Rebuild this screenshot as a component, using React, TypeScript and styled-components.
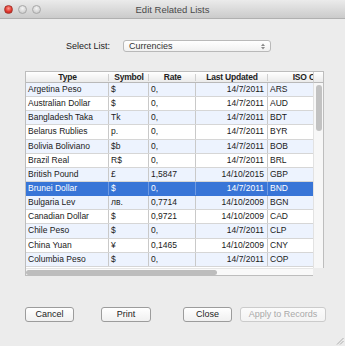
import React from "react";
import styled, { createGlobalStyle } from "styled-components";

const Global = createGlobalStyle`
  html, body { margin: 0; padding: 0; background: #ececec; }
  body { font-family: "Liberation Sans", Arial, sans-serif; }
`;

const Window = styled.div`
  width: 345px;
  height: 346px;
  position: relative;
  overflow: hidden;
  background: #ececec;
  display: flex;
  flex-direction: column;
`;

const TitleBar = styled.div`
  height: 18px;
  flex: none;
  display: grid;
  grid-template-columns: 1fr auto 1fr;
  align-items: center;
  background: linear-gradient(#ebebeb, #cbcbcb);
  border-bottom: 1px solid #b0b0b0;
`;

const Lights = styled.div`
  display: flex;
  gap: 5px;
  padding-left: 4px;
`;

const Light = styled.span<{ $red?: boolean }>`
  width: 9px;
  height: 9px;
  box-sizing: border-box;
  border-radius: 50%;
  background: ${(p) =>
    p.$red
      ? "radial-gradient(circle at 50% 35%, #ff9a90, #e2372e 55%, #b3201a)"
      : "radial-gradient(circle at 50% 35%, #f4f4f4, #d6d6d6 60%, #bfbfbf)"};
  border: 1px solid ${(p) => (p.$red ? "#a5372f" : "#a8a8a8")};
`;

const Title = styled.div`
  font-size: 9.5px;
  color: #4a4a4a;
`;

const SelectRow = styled.div`
  display: flex;
  align-items: center;
  margin-top: 21px;
  padding-left: 66px;
  height: 12px;
`;

const Label = styled.span`
  width: 57px;
  font-size: 9px;
  color: #222;
`;

const Popup = styled.div`
  width: 148px;
  height: 12px;
  box-sizing: border-box;
  border: 1px solid #b9b9b9;
  border-radius: 3px;
  background: linear-gradient(#ffffff, #f1f1f1);
  display: flex;
  align-items: center;
  justify-content: space-between;
  padding: 0 5px 0 5px;
  font-size: 9px;
  color: #333;
`;

const Frame = styled.div`
  margin: 19px 0 0 25px;
  width: 299px;
  height: 205px;
  box-sizing: border-box;
  border-top: 1px solid #bdbdbd;
  border-left: 1px solid #bdbdbd;
  display: grid;
  grid-template-columns: 287px 11px;
  grid-template-rows: 11px 185px 8px;
  background: #fff;
`;

const Viewport = styled.div`
  grid-row: 1 / 3;
  grid-column: 1;
  overflow: hidden;
  display: flex;
  flex-direction: column;
`;

const COLS = "83px 40px 47px 72px 86px";

const HeaderRow = styled.div`
  display: grid;
  grid-template-columns: ${COLS};
  height: 11px;
  flex: none;
  box-sizing: border-box;
  border-bottom: 1px solid #b9b9b9;
  background: linear-gradient(#ffffff, #ebebeb);
`;

const HeadCell = styled.div`
  position: relative;
  font-size: 8.5px;
  font-weight: bold;
  letter-spacing: -0.2px;
  color: #222;
  text-align: center;
  line-height: 10px;
  white-space: nowrap;
  overflow: hidden;
  &::after {
    content: "";
    position: absolute;
    right: 0;
    top: 2px;
    bottom: 1px;
    width: 1px;
    background: #cfcfcf;
  }
`;

const Row = styled.div<{ $alt: boolean; $sel: boolean }>`
  display: grid;
  grid-template-columns: ${COLS};
  height: 14.15px;
  flex: none;
  box-sizing: border-box;
  border-bottom: 1px solid ${(p) => (p.$sel ? "#3875d7" : "#d6d6d6")};
  background: ${(p) => (p.$sel ? "#3875d7" : p.$alt ? "#edf3fe" : "#ffffff")};
  color: ${(p) => (p.$sel ? "#ffffff" : "#1a1a1a")};
`;

const Cell = styled.div<{ $right?: boolean; $sel?: boolean }>`
  font-size: 8.5px;
  line-height: 13px;
  white-space: nowrap;
  overflow: hidden;
  box-sizing: border-box;
  padding: ${(p) => (p.$right ? "0 3px 0 0" : "0 0 0 2px")};
  text-align: ${(p) => (p.$right ? "right" : "left")};
  border-right: 1px solid ${(p) => (p.$sel ? "#6f9ae2" : "#c9c9c9")};
`;

const CornerHead = styled.div`
  grid-row: 1;
  grid-column: 2;
  box-sizing: border-box;
  background: linear-gradient(#ffffff, #ebebeb);
  border-bottom: 1px solid #b9b9b9;
  border-left: 1px solid #cfcfcf;
  border-right: 1px solid #bdbdbd;
`;

const VTrack = styled.div`
  grid-row: 2;
  grid-column: 2;
  box-sizing: border-box;
  background: #f7f7f7;
  border-left: 1px solid #e2e2e2;
  border-right: 1px solid #bdbdbd;
  padding: 2px 1px 0 2px;
`;

const VThumb = styled.div`
  width: 6px;
  height: 46px;
  border-radius: 3px;
  background: #c2c2c2;
`;

const HTrack = styled.div`
  grid-row: 3;
  grid-column: 1;
  box-sizing: border-box;
  background: #f9f9f9;
  border-top: 1px solid #e6e6e6;
  border-bottom: 1px solid #bdbdbd;
  padding: 1px 0 0 0;
`;

const HThumb = styled.div`
  width: 191px;
  height: 5px;
  border-radius: 3px;
  background: #bdbdbd;
`;

const Corner = styled.div`
  grid-row: 3;
  grid-column: 2;
  background: #ececec;
`;

const Buttons = styled.div`
  display: flex;
  margin: 31px 0 0 25px;
`;

const Button = styled.button<{ $w: number; $ml: number }>`
  width: ${(p) => p.$w}px;
  margin-left: ${(p) => p.$ml}px;
  height: 15px;
  box-sizing: border-box;
  padding: 0;
  border: 1px solid #9c9c9c;
  border-radius: 3px;
  background: linear-gradient(#ffffff, #f0f0f0);
  font-family: "Liberation Sans", Arial, sans-serif;
  font-size: 9px;
  line-height: 13px;
  color: #1c1c1c;
  &:disabled {
    border-color: #cbcbcb;
    background: linear-gradient(#fbfbfb, #f3f3f3);
    color: #a9a9a9;
  }
`;

const Grip = styled.svg`
  position: absolute;
  right: 1px;
  bottom: 1px;
`;

type Currency = [string, string, string, string, string];

const DATA: Currency[] = [
  ["Argetina Peso", "$", "0,", "14/7/2011", "ARS"],
  ["Australian Dollar", "$", "0,", "14/7/2011", "AUD"],
  ["Bangladesh Taka", "Tk", "0,", "14/7/2011", "BDT"],
  ["Belarus Rublies", "p.", "0,", "14/7/2011", "BYR"],
  ["Bolivia Boliviano", "$b", "0,", "14/7/2011", "BOB"],
  ["Brazil Real", "R$", "0,", "14/7/2011", "BRL"],
  ["British Pound", "£", "1,5847", "14/10/2015", "GBP"],
  ["Brunei Dollar", "$", "0,", "14/7/2011", "BND"],
  ["Bulgaria Lev", "лв.", "0,7714", "14/10/2009", "BGN"],
  ["Canadian Dollar", "$", "0,9721", "14/10/2009", "CAD"],
  ["Chile Peso", "$", "0,", "14/7/2011", "CLP"],
  ["China Yuan", "¥", "0,1465", "14/10/2009", "CNY"],
  ["Columbia Peso", "$", "0,", "14/7/2011", "COP"],
];

const HEADERS = ["Type", "Symbol", "Rate", "Last Updated", "ISO Code"];

export default function App() {
  const selected = 7;
  return (
    <>
      <Global />
      <Window>
        <TitleBar>
          <Lights>
            <Light $red />
            <Light />
            <Light />
          </Lights>
          <Title>Edit Related Lists</Title>
          <span />
        </TitleBar>

        <SelectRow>
          <Label>Select List:</Label>
          <Popup>
            <span>Currencies</span>
            <svg width="4" height="7" viewBox="0 0 4 7">
              <path d="M0 3 L2 0.5 L4 3 Z" fill="#8a8a8a" />
              <path d="M0 4 L2 6.5 L4 4 Z" fill="#8a8a8a" />
            </svg>
          </Popup>
        </SelectRow>

        <Frame>
          <Viewport>
            <HeaderRow>
              {HEADERS.map((h) => (
                <HeadCell key={h}>{h}</HeadCell>
              ))}
            </HeaderRow>
            {DATA.map((r, i) => {
              const sel = i === selected;
              return (
                <Row key={r[4]} $alt={i % 2 === 0} $sel={sel}>
                  <Cell $sel={sel}>{r[0]}</Cell>
                  <Cell $sel={sel}>{r[1]}</Cell>
                  <Cell $sel={sel}>{r[2]}</Cell>
                  <Cell $sel={sel} $right>
                    {r[3]}
                  </Cell>
                  <Cell $sel={sel}>{r[4]}</Cell>
                </Row>
              );
            })}
          </Viewport>
          <CornerHead />
          <VTrack>
            <VThumb />
          </VTrack>
          <HTrack>
            <HThumb />
          </HTrack>
          <Corner />
        </Frame>

        <Buttons>
          <Button $w={49} $ml={0}>Cancel</Button>
          <Button $w={50} $ml={27}>Print</Button>
          <Button $w={49} $ml={32}>Close</Button>
          <Button $w={86} $ml={8} disabled>
            Apply to Records
          </Button>
        </Buttons>

        <Grip width="8" height="8" viewBox="0 0 8 8">
          <path d="M7.5 1 L1 7.5 M7.5 4 L4 7.5" stroke="#a0a0a0" strokeWidth="0.8" />
        </Grip>
      </Window>
    </>
  );
}
